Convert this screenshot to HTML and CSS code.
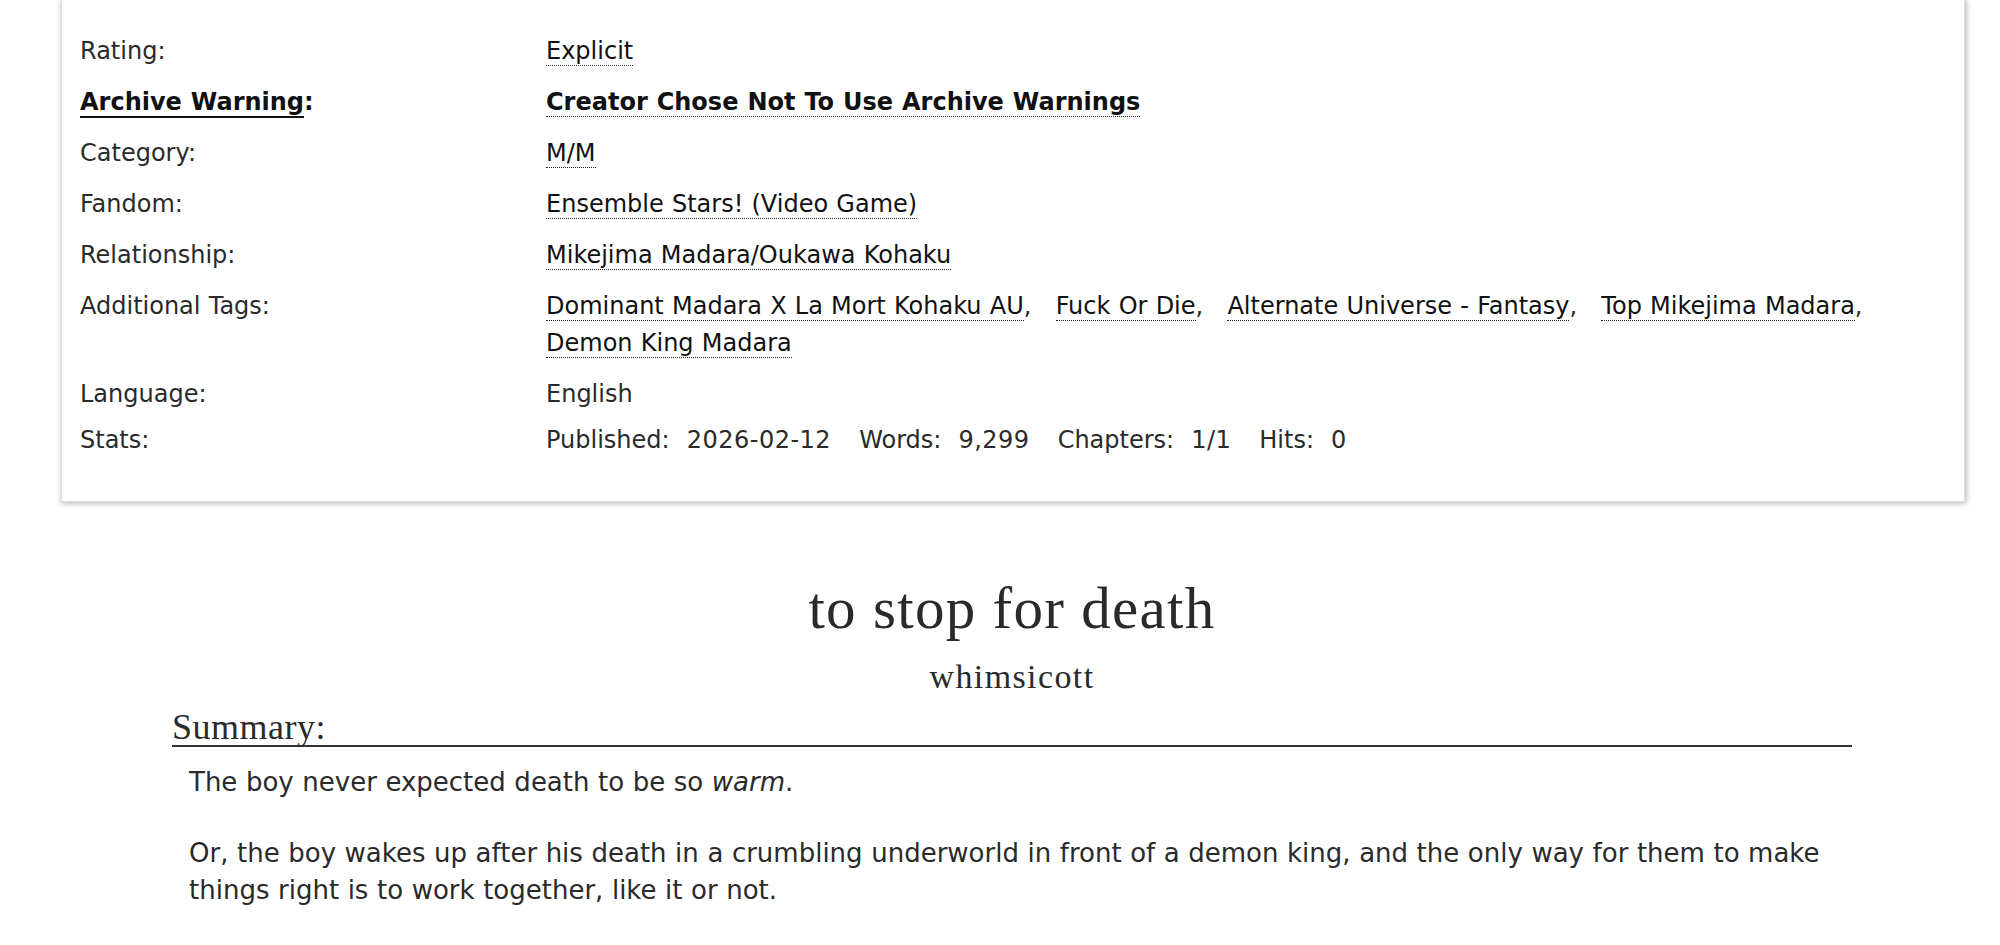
FILE: index.html
```html
<!DOCTYPE html>
<html lang="en">
<head>
<meta charset="utf-8">
<title>to stop for death</title>
<link rel="stylesheet" href="styles.css">
</head>
<body>
<div class="wrapper">
  <dl class="meta">
    <dt>Rating:</dt>
    <dd><a class="tag" href="#">Explicit</a></dd>

    <dt class="warn"><a href="#">Archive Warning</a>:</dt>
    <dd class="warn"><a class="tag" href="#">Creator Chose Not To Use Archive Warnings</a></dd>

    <dt>Category:</dt>
    <dd><a class="tag" href="#">M/M</a></dd>

    <dt>Fandom:</dt>
    <dd><a class="tag" href="#">Ensemble Stars! (Video Game)</a></dd>

    <dt>Relationship:</dt>
    <dd><a class="tag" href="#">Mikejima Madara/Oukawa Kohaku</a></dd>

    <dt>Additional Tags:</dt>
    <dd>
      <ul class="tags">
        <li><a class="tag" href="#">Dominant Madara X La Mort Kohaku AU</a>,</li>
        <li><a class="tag" href="#">Fuck Or Die</a>,</li>
        <li><a class="tag" href="#">Alternate Universe - Fantasy</a>,</li>
        <li><a class="tag" href="#">Top Mikejima Madara</a>,</li>
        <li><a class="tag" href="#">Demon King Madara</a></li>
      </ul>
    </dd>

    <dt>Language:</dt>
    <dd class="lang">English</dd>

    <dt>Stats:</dt>
    <dd>
      <dl class="stats">
        <dt>Published:</dt><dd>2026-02-12</dd>
        <dt>Words:</dt><dd>9,299</dd>
        <dt>Chapters:</dt><dd>1/1</dd>
        <dt>Hits:</dt><dd>0</dd>
      </dl>
    </dd>
  </dl>
</div>

<div class="preface">
  <h2 class="title">to stop for death</h2>
  <h3 class="byline">whimsicott</h3>
  <div class="summary">
    <h3 class="heading">Summary:</h3>
    <blockquote class="userstuff">
      <p>The boy never expected death to be so <em>warm</em>.</p>
      <p>Or, the boy wakes up after his death in a crumbling underworld in front of a demon king, and the only way for them to make things right is to work together, like it or not.</p>
    </blockquote>
  </div>
</div>
</body>
</html>
```

FILE: styles.css
```css
html, body {
  margin: 0;
  padding: 0;
  background: #fff;
}

body {
  font-family: "DejaVu Sans", Verdana, sans-serif;
  font-size: 24px;
  color: #2a2a2a;
}

a {
  color: #111;
  text-decoration: none;
}

.wrapper {
  margin: -1px 35px 0 61px;
  border: 1px solid #ddd;
  box-shadow: 1px 1px 6px #aaa;
  background: #fff;
  padding: 33px 18px 42px 18px;
}

.meta {
  display: grid;
  grid-template-columns: 466px 1fr;
  margin: 0;
  line-height: 37px;
  word-spacing: 0.6px;
}

.meta > dt,
.meta > dd {
  margin: 0 0 14px 0;
}

.meta > dt.warn {
  font-weight: bold;
  color: #111;
}

.meta > dt.warn a {
  border-bottom: 2px solid #111;
}

.meta > dd.warn {
  font-weight: bold;
}

.meta > dd.lang,
.meta > dt:nth-last-of-type(2) {
  margin-bottom: 9px;
}

.meta > dt:last-of-type,
.meta > dd:last-of-type {
  margin-bottom: 0;
}

.tag {
  border-bottom: 1px dotted #222;
}

.tags {
  list-style: none;
  margin: 0;
  padding: 0;
}

.tags li {
  display: inline;
  margin-right: 16px;
}

.stats {
  display: flex;
  margin: 0;
}

.stats dt {
  margin: 0 17px 0 0;
}

.stats dd {
  margin: 0 28px 0 0;
  letter-spacing: 0.5px;
}

.preface {
  margin: 0 148px 0 172px;
  padding-top: 71px;
  color: #2a2a2a;
}

.title {
  font-family: "Liberation Serif", "Times New Roman", serif;
  font-weight: normal;
  font-size: 59px;
  letter-spacing: 1.3px;
  text-align: center;
  line-height: 70px;
  margin: 0 0 12px 0;
}

.byline {
  font-family: "Liberation Serif", "Times New Roman", serif;
  font-weight: normal;
  font-size: 34px;
  letter-spacing: 1.4px;
  text-align: center;
  line-height: 44px;
  margin: 0 0 10px 0;
}

.heading {
  font-family: "Liberation Serif", "Times New Roman", serif;
  font-weight: normal;
  font-size: 36px;
  letter-spacing: 0.5px;
  line-height: 36px;
  margin: 0;
  border-bottom: 2px solid #333;
}

.userstuff {
  margin: 0;
  padding: 17px 17px 0 17px;
  font-size: 26px;
  line-height: 37px;
  word-spacing: 0.3px;
}

.userstuff p {
  margin: 0 0 34px 0;
}
```
